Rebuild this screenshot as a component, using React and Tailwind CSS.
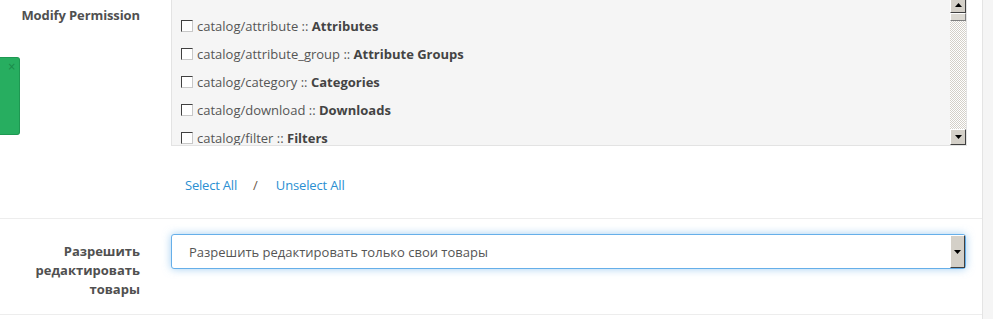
import React from "react";

const items = [
  ["catalog/attribute", "Attributes"],
  ["catalog/attribute_group", "Attribute Groups"],
  ["catalog/category", "Categories"],
  ["catalog/download", "Downloads"],
  ["catalog/filter", "Filters"],
];

function Checkbox() {
  return (
    <span className="inline-block w-[12px] h-[12px] shrink-0 bg-white border border-t-[#404040] border-l-[#404040] border-r-[#c8c8c8] border-b-[#c8c8c8] mr-[4px]" />
  );
}

function ScrollBtn({ up }) {
  return (
    <div className="h-[16px] w-full bg-[#d4d0c8] border border-t-white border-l-white border-r-[#404040] border-b-[#404040] flex items-center justify-center shrink-0">
      <svg width="7" height="4" viewBox="0 0 7 4">
        {up ? <path d="M3.5 0 L7 4 L0 4 Z" fill="#000" /> : <path d="M0 0 L7 0 L3.5 4 Z" fill="#000" />}
      </svg>
    </div>
  );
}

export default function App() {
  return (
    <div className="w-[993px] h-[319px] overflow-hidden flex bg-[#f5f5f5] font-['Open_Sans',sans-serif] text-[13px] text-[#555] relative">
      <div className="w-[983px] h-full bg-white border-r border-[#e4e4e4] flex flex-col">
        {/* Row 1 */}
        <div className="flex items-start pb-[24px] border-b border-[#ededed]">
          <div className="w-[156px] shrink-0 pr-[16px] pt-[5px] text-right font-bold leading-[20px] text-[#505050] tracking-[-0.1px]">
            Modify Permission
          </div>
          <div className="flex-1 pl-[15px] pr-[15px]">
            <div className="-mt-[4px] h-[150px] bg-[#f5f5f5] border border-[#e3e3e3] flex overflow-hidden">
              <div className="flex-1 pt-[15px] pl-[9px] overflow-hidden">
                {items.map(([p, n]) => (
                  <div key={p} className="h-[28px] flex items-center leading-[18px] whitespace-nowrap">
                    <Checkbox />
                    <span>
                      {p} :: <b className="text-[#444]">{n}</b>
                    </span>
                  </div>
                ))}
              </div>
              <div className="w-[16px] flex flex-col">
                <ScrollBtn up />
                <div className="h-[8px] bg-[#dcd9d2] border-t border-l border-white border-b border-b-[#808080] border-r border-r-[#808080] shrink-0" />
                <div className="flex-1 bg-[image:repeating-conic-gradient(#d4d0c8_0%_25%,#ffffff_0%_50%)] bg-size-[2px_2px]" />
                <ScrollBtn />
              </div>
            </div>
            <div className="mt-[30px] flex items-center leading-[18px] whitespace-nowrap">
              <span className="ml-[14px] text-[#2b8fd2] tracking-[-0.2px]">Select All</span>
              <span className="ml-[16px] text-[#6b5a48]">/</span>
              <span className="ml-[18px] text-[#2b8fd2] tracking-[-0.15px]">Unselect All</span>
            </div>
          </div>
        </div>
        {/* Row 2 */}
        <div className="flex items-start pt-[15px] pb-[15px] border-b border-[#ededed]">
          <div className="w-[156px] shrink-0 pr-[16px] pt-[8px] text-right font-bold leading-[19px] text-[#505050]">
            Разрешить
            <br />
            редактировать
            <br />
            товары
          </div>
          <div className="flex-1 pl-[15px] pr-[16px]">
            <div className="h-[35px] bg-white border border-[#66afe9] rounded-[3px] shadow-[0_0_8px_rgba(102,175,233,0.6)] flex items-stretch">
              <div className="flex-1 flex items-center pl-[17px] pt-[2px] whitespace-nowrap">
                Разрешить редактировать только свои товары
              </div>
              <div className="w-[15px] bg-[#d4d0c8] border border-t-white border-l-white border-r-[#404040] border-b-[#404040] flex items-center justify-center">
                <svg width="7" height="4" viewBox="0 0 7 4">
                  <path d="M0 0 L7 0 L3.5 4 Z" fill="#000" />
                </svg>
              </div>
            </div>
          </div>
        </div>
      </div>
      {/* Alert overlay */}
      <div className="absolute left-0 top-[57px] w-[20px] h-[78px] bg-[#27ae60] border border-[#1e9852] border-l-0 rounded-r-[3px]">
        <span className="absolute right-[3px] top-[4px] text-[10px] leading-[10px] text-[#1b8a4a] font-['DejaVu_Sans',sans-serif]">×</span>
      </div>
    </div>
  );
}
